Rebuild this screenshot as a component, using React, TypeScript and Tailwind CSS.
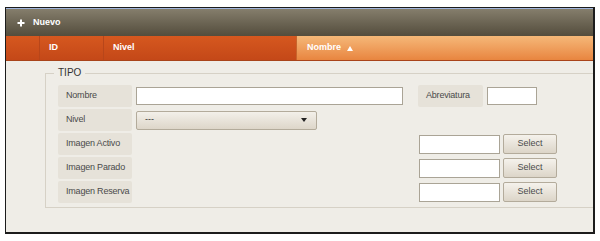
import React from "react";

const Label = ({ children, className = "" }: { children: React.ReactNode; className?: string }) => (
  <div className={`h-[22px] bg-[#e6e2d9] rounded-[2px] flex items-center pl-[8px] whitespace-nowrap tracking-[-0.2px] text-[#4a4a4a] ${className}`}>
    {children}
  </div>
);

const Input = ({ className = "" }: { className?: string }) => (
  <div className={`bg-white border border-[#aaa496] ${className}`} />
);

const SelectBtn = () => (
  <div className="ml-[3px] w-[54px] h-[20px] rounded-[2px] border border-[#b3ab9b] bg-gradient-to-b from-[#f5f2ec] to-[#dcd5c8] flex items-center justify-center text-[#4a4a4a]">
    Select
  </div>
);

export default function App() {
  return (
    <div
      className="w-[600px] h-[241px] bg-white pt-[7px] pl-[5px]"
      style={{ fontFamily: '"Liberation Sans", Arial, sans-serif' }}
    >
      <div className="w-[590px] h-[227px] border-l border-t border-r-2 border-b-2 border-[#1c1c1c] flex flex-col overflow-hidden bg-[#efede7] text-[9px]">
        {/* dark toolbar */}
        <div className="h-[28px] shrink-0 border-t border-[#9fb4dc] bg-gradient-to-b from-[#857e6c] to-[#544d3d] flex items-center pl-[11px] text-white font-bold">
          <svg width="8" height="8" viewBox="0 0 8 8" className="mr-[8px]">
            <path d="M4 0.5V7.5M0.5 4H7.5" stroke="white" strokeWidth="2" />
          </svg>
          <span>Nuevo</span>
        </div>
        {/* orange header */}
        <div className="h-[25px] shrink-0 flex text-white font-bold border-b border-[#a9441a]">
          <div className="w-[34px] bg-gradient-to-b from-[#d6581f] to-[#c44818] border-r border-[#b8461a]" />
          <div className="w-[64px] bg-gradient-to-b from-[#d6581f] to-[#c44818] border-r border-[#b8461a] flex items-center pl-[9px]">
            ID
          </div>
          <div className="w-[193px] bg-gradient-to-b from-[#d6581f] to-[#c44818] border-r border-[#c8652c] flex items-center pl-[9px]">
            Nivel
          </div>
          <div className="flex-1 bg-gradient-to-b from-[#f5b878] to-[#e8853f] flex items-center pl-[10px]">
            <span>Nombre</span>
            <svg width="6" height="5" viewBox="0 0 6 5" className="ml-[6px]">
              <path d="M0 5L3 0L6 5Z" fill="white" />
            </svg>
          </div>
        </div>
        {/* content */}
        <div className="flex-1 pl-[39px] pt-[6px] overflow-hidden">
          <fieldset className="w-[560px] border border-[#d6d1c6] pl-[8px] pb-[4px]">
            <legend className="px-[4px] text-[10px] text-[#333] leading-[12px]">TIPO</legend>
            <div className="flex flex-col gap-[2px] pl-[4px] pt-[6px]">
              <div className="flex items-center h-[22px]">
                <Label className="w-[74px]">Nombre</Label>
                <Input className="ml-[4px] w-[267px] h-[18px]" />
                <Label className="ml-[15px] w-[65px]">Abreviatura</Label>
                <Input className="ml-[4px] w-[50px] h-[18px]" />
              </div>
              <div className="flex items-center h-[22px]">
                <Label className="w-[74px]">Nivel</Label>
                <div className="ml-[4px] w-[181px] h-[19px] rounded-[2px] border border-[#b3ab9b] bg-gradient-to-b from-[#f3f0ea] to-[#ddd6c9] flex items-center pl-[8px] pr-[9px] justify-between text-[#333]">
                  <span>---</span>
                  <svg width="6" height="4" viewBox="0 0 6 4">
                    <path d="M0 0L6 0L3 4Z" fill="#222" />
                  </svg>
                </div>
              </div>
              {["Imagen Activo", "Imagen Parado", "Imagen Reserva"].map((t) => (
                <div key={t} className="flex items-center h-[22px]">
                  <Label className="w-[74px] shrink-0">{t}</Label>
                  <Input className="ml-[287px] w-[81px] h-[19px]" />
                  <SelectBtn />
                </div>
              ))}
            </div>
          </fieldset>
        </div>
      </div>
    </div>
  );
}
